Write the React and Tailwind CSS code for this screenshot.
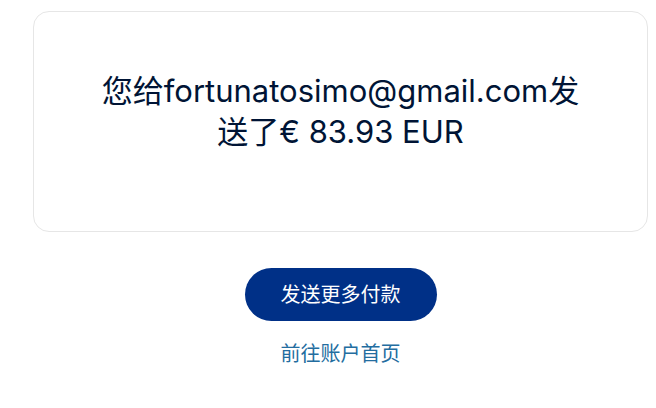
export default function App() {
  return (
    <div className="min-h-[408px] w-[656px] bg-white pl-[33px] pr-[8px] pt-[11px]" style={{ fontFamily: 'Inter, "Noto Sans CJK SC", sans-serif' }}>
      <div className="flex h-[221px] w-[615px] flex-col items-center rounded-[16px] border border-[#e6e6e6] pt-[58px]">
        <p className="w-[488px] text-center text-[31px] leading-[41px] text-[#001435]">
          您给fortunatosimo@gmail.com发送了€ 83.93 EUR
        </p>
      </div>
      <div className="flex flex-col items-center pt-[36px]">
        <button className="flex h-[53px] w-[192px] items-center justify-center rounded-full bg-[#003087] text-[20px] text-white">
          发送更多付款
        </button>
        <a className="mt-[19px] text-[20px] leading-[28px] text-[#236d9f]">前往账户首页</a>
      </div>
    </div>
  );
}
